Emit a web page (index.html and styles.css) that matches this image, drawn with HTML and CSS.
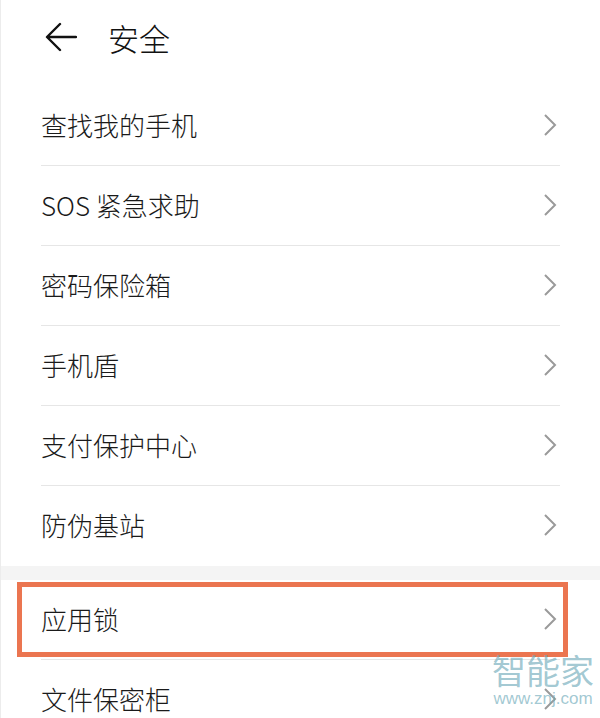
FILE: index.html
```html
<!DOCTYPE html>
<html lang="zh-CN">
<head>
<meta charset="utf-8">
<link rel="stylesheet" href="styles.css">
</head>
<body>
<div class="page">
  <header class="topbar">
    <svg class="back" viewBox="0 0 32 30" width="32" height="30"><path d="M31 15 H3 M15 2 L2 15 L15 28" fill="none" stroke="#111" stroke-width="2.4" stroke-linecap="round" stroke-linejoin="round"/></svg>
    <h1 class="title">安全</h1>
  </header>
  <ul class="group">
    <li class="item"><div class="item-inner"><span>查找我的手机</span><svg class="chev" viewBox="0 0 14 24" width="14" height="24"><path d="M2 2 L12 12 L2 22" fill="none" stroke="#9a9a9a" stroke-width="2"/></svg></div></li>
    <li class="item"><div class="item-inner"><span>SOS 紧急求助</span><svg class="chev" viewBox="0 0 14 24" width="14" height="24"><path d="M2 2 L12 12 L2 22" fill="none" stroke="#9a9a9a" stroke-width="2"/></svg></div></li>
    <li class="item"><div class="item-inner"><span>密码保险箱</span><svg class="chev" viewBox="0 0 14 24" width="14" height="24"><path d="M2 2 L12 12 L2 22" fill="none" stroke="#9a9a9a" stroke-width="2"/></svg></div></li>
    <li class="item"><div class="item-inner"><span>手机盾</span><svg class="chev" viewBox="0 0 14 24" width="14" height="24"><path d="M2 2 L12 12 L2 22" fill="none" stroke="#9a9a9a" stroke-width="2"/></svg></div></li>
    <li class="item"><div class="item-inner"><span>支付保护中心</span><svg class="chev" viewBox="0 0 14 24" width="14" height="24"><path d="M2 2 L12 12 L2 22" fill="none" stroke="#9a9a9a" stroke-width="2"/></svg></div></li>
    <li class="item last"><div class="item-inner"><span>防伪基站</span><svg class="chev" viewBox="0 0 14 24" width="14" height="24"><path d="M2 2 L12 12 L2 22" fill="none" stroke="#9a9a9a" stroke-width="2"/></svg></div></li>
  </ul>
  <div class="gap"></div>
  <ul class="group">
    <li class="item highlight"><div class="item-inner"><span>应用锁</span><svg class="chev" viewBox="0 0 14 24" width="14" height="24"><path d="M2 2 L12 12 L2 22" fill="none" stroke="#9a9a9a" stroke-width="2"/></svg></div></li>
    <li class="item"><div class="item-inner"><span>文件保密柜</span><svg class="chev" viewBox="0 0 14 24" width="14" height="24"><path d="M2 2 L12 12 L2 22" fill="none" stroke="#9a9a9a" stroke-width="2"/></svg></div></li>
  </ul>
  <div class="watermark">
    <div class="wm-big">智能家</div>
    <div class="wm-small">www.znj.com</div>
  </div>
</div>
</body>
</html>
```
FILE: styles.css
```css
* { box-sizing: border-box; }
html, body { margin: 0; padding: 0; background: #fff; }
body { font-family: "Noto Sans CJK SC", "Noto Sans", sans-serif; color: #1a1a1a; }
.page { position: relative; width: 600px; height: 718px; overflow: hidden; border-left: 1px solid #ececec; }
.topbar { height: 86px; display: flex; align-items: center; padding-left: 44px; padding-bottom: 12px; }
.back { display: block; }
.title { margin: 0 0 0 31px; font-size: 31px; font-weight: 300; line-height: 1; color: #111; }
.group { list-style: none; margin: 0; padding: 0; }
.item { position: relative; height: 80px; padding: 0 40px 0 40px; }
.item-inner { height: 100%; display: flex; align-items: center; justify-content: space-between; border-bottom: 1px solid #e6e6e6; font-size: 26px; font-weight: 300; line-height: 1; padding-bottom: 2px; }
.item.last .item-inner { border-bottom: none; }
.chev { margin-right: 3px; display: block; }
.gap { height: 14px; background: #f4f4f4; }
.highlight::after { content: ""; position: absolute; left: 16px; right: 32px; top: 2px; bottom: 3px; border: 5px solid #eb7550; }
.watermark { position: absolute; left: 489px; top: 651px; width: 106px; text-align: center; color: rgba(110, 170, 185, 0.65); }
.wm-big { font-size: 34px; line-height: 38px; letter-spacing: 0; }
.wm-small { font-family: "Liberation Sans", sans-serif; font-size: 17px; line-height: 20px; }
```
